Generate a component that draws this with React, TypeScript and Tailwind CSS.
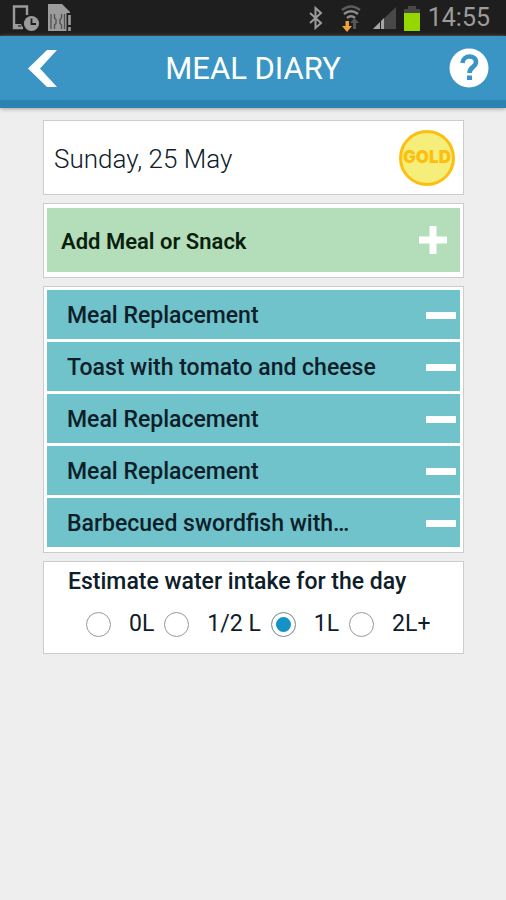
import { useState } from "react";

const initialMeals = [
  { id: 1, name: "Meal Replacement" },
  { id: 2, name: "Toast with tomato and cheese" },
  { id: 3, name: "Meal Replacement" },
  { id: 4, name: "Meal Replacement" },
  { id: 5, name: "Barbecued swordfish with…" },
];

const waterOptions = ["0L", "1/2 L", "1L", "2L+"];

function StatusBar() {
  return (
    <div className="h-9 bg-[#1e1e1e] flex items-center pl-3 pr-4 text-[#9b9b9b]">
      <svg className="w-7 h-8" viewBox="0 0 28 32" fill="none">
        <path d="M2 13V4.500h13V13M2 12v14h9" stroke="currentColor" strokeWidth="2.4" />
        <path d="M1 22h8l2 5H1z" fill="currentColor" />
        <path d="M6 24h3" stroke="#1e1e1e" strokeWidth="1.200" />
        <circle cx="19.500" cy="21.500" r="7.600" fill="currentColor" />
        <path d="M19.500 16.500V22h4.500" stroke="#1e1e1e" strokeWidth="1.8" />
      </svg>
      <svg className="w-7 h-8 ml-2" viewBox="0 0 28 32" fill="none">
        <path d="M0 2h14l8 8v19H0z" fill="currentColor" />
        <path d="M3 12v15M16.500 12v15M6.500 12v4l1.500 1.500v4L6.500 23v4M13.500 12v4L12 17.500v4l1.500 1.500v4" stroke="#505050" strokeWidth="1.300" />
        <path d="M18.500 11h5.500v19h-5.500z" fill="#1e1e1e" />
        <path d="M21.500 13v10M21.500 25v4" stroke="currentColor" strokeWidth="2.600" />
      </svg>

      <div className="ml-auto flex items-center">
        <svg className="w-4 h-6" viewBox="0 0 16 24" fill="none">
          <path d="M2 7l11 10-5.500 5V2L13 7 2 17" stroke="currentColor" strokeWidth="2" />
        </svg>
        <svg className="w-6 h-8 ml-4" viewBox="0 0 24 32" fill="none">
          <path d="M2 8q9-7 18 0" stroke="#5c5c5c" strokeWidth="2.600" />
          <path d="M4 12q7-5.500 14 0M7 16q4-3.500 8 0" stroke="#8c8c8c" strokeWidth="2.600" />
          <path d="M13 27v-6h-3l4.500-5 4.500 5h-3v6z" fill="#555555" />
          <path d="M5.500 19H9v5h3l-5 6-5-6h3.500z" fill="#f2a13a" />
        </svg>
        <svg className="w-6 h-6 ml-2" viewBox="0 0 24 24">
          <path d="M24 1v22H1z" fill="#484848" />
          <path d="M12 12v11H1z" fill="#a6a6a6" />
          <path d="M8.500 12v11" stroke="#1e1e1e" />
        </svg>
        <svg className="w-4 h-7 ml-2" viewBox="0 0 16 28">
          <path d="M4 2h8v3h4v7H0V5h4z" fill="#484848" />
          <path d="M0 9h16v18H0z" fill="#97d700" />
        </svg>
        <span className="ml-2 text-[25px] leading-9">14:55</span>
      </div>
    </div>
  );
}

function Header() {
  return (
    <header className="h-18 bg-[#3a95c5] border-b-8 border-[#2b83b2] shadow-[0_1px_4px_#a0a0a0] grid grid-cols-[1fr_auto_1fr] items-center text-white">
      <button aria-label="Back" className="justify-self-start ml-7">
        <svg className="block w-8 h-10" viewBox="0 0 32 40" fill="currentColor">
          <path d="M19 2h10L12 20.500 29 39H19L0 20.500z" />
        </svg>
      </button>
      <h1 className="pt-[2px] text-[31px] leading-9">MEAL DIARY</h1>
      <button aria-label="Help" className="justify-self-end mr-[17px]">
        <svg className="block w-10 h-10" viewBox="0 0 40 40" fill="none">
          <circle cx="20" cy="20" r="19.500" fill="currentColor" />
          <path d="M13.500 15c.5-8.500 14-8.500 13.500-.5-.3 4.500-6.500 4.500-6.500 10.500" stroke="#3a95c5" strokeWidth="4.600" />
          <path d="M18 27.500h5v4.500h-5z" fill="#3a95c5" />
        </svg>
      </button>
    </header>
  );
}

function GoldBadge() {
  return (
    <div className="size-14 rounded-full border-3 border-[#fdbf0f] bg-[#f5ee7a] flex items-center justify-center font-['Inter',sans-serif] text-[17px] font-black text-[#fdbf0f]">
      GOLD
    </div>
  );
}

export default function App() {
  const [meals, setMeals] = useState(initialMeals);
  const [water, setWater] = useState("1L");

  const addMeal = () => setMeals([...meals, { id: Date.now(), name: "Meal Replacement" }]);
  const removeMeal = (id: number) => setMeals(meals.filter((m) => m.id !== id));

  return (
    <div className="min-h-screen bg-[#eeeeee] font-['Roboto',sans-serif] text-[#0d2029]">
      <StatusBar />
      <Header />

      <main className="pl-[43px] pr-[42px] pt-3 pb-8 flex flex-col gap-2">
        <section className="h-[75px] bg-white border border-[#cccccc] pl-[10px] pr-2 flex items-center justify-between">
          <h2 className="pt-[2px] text-[26px] leading-8 font-[350]">Sunday, 25 May</h2>
          <GoldBadge />
        </section>

        <section className="bg-white border border-[#cccccc] px-[3px] pt-1 pb-[5px]">
          <button
            onClick={addMeal}
            className="w-full h-16 bg-[#b4ddba] pl-[14px] pr-[13px] flex items-center justify-between text-[#0b1f0e]"
          >
            <span className="pt-1 text-[22px] leading-7 font-semibold">Add Meal or Snack</span>
            <svg className="w-7 h-7" viewBox="0 0 28 28" fill="#ffffff">
              <path d="M10.500 0h7v10.500H28v7H17.500V28h-7V17.500H0v-7h10.500z" />
            </svg>
          </button>
        </section>

        <section className="bg-white border border-[#cccccc] px-[3px] pt-[3px] pb-[5px]">
          <ul className="flex flex-col gap-[3px]">
            {meals.map((m) => (
              <li key={m.id} className="h-[49px] bg-[#70c2cb] pl-5 pr-1 flex items-center justify-between">
                <span className="pt-[2px] text-[23px] leading-7 font-medium truncate">{m.name}</span>
                <button aria-label={`Remove ${m.name}`} onClick={() => removeMeal(m.id)} className="shrink-0 pt-[14px] pb-3">
                  <span className="block w-[30px] h-[7px] bg-white" />
                </button>
              </li>
            ))}
          </ul>
        </section>

        <fieldset className="bg-white border border-[#cccccc] h-[93px] pl-6 pt-1">
          <legend className="float-left w-full text-[23px] leading-8 font-medium">
            Estimate water intake for the day
          </legend>
          <div className="clear-both pt-3 pl-[18px] flex items-center gap-[10px]">
            {waterOptions.map((w) => (
              <label key={w} className="flex items-center gap-[18px] text-[23px] leading-7 whitespace-nowrap">
                <input
                  type="radio"
                  name="water"
                  value={w}
                  checked={water === w}
                  onChange={() => setWater(w)}
                  className="appearance-none size-[25px] rounded-full border border-[#999999] bg-white checked:bg-[#1593c6] checked:shadow-[inset_0_0_0_4px_#ffffff]"
                />
                {w}
              </label>
            ))}
          </div>
        </fieldset>
      </main>
    </div>
  );
}
